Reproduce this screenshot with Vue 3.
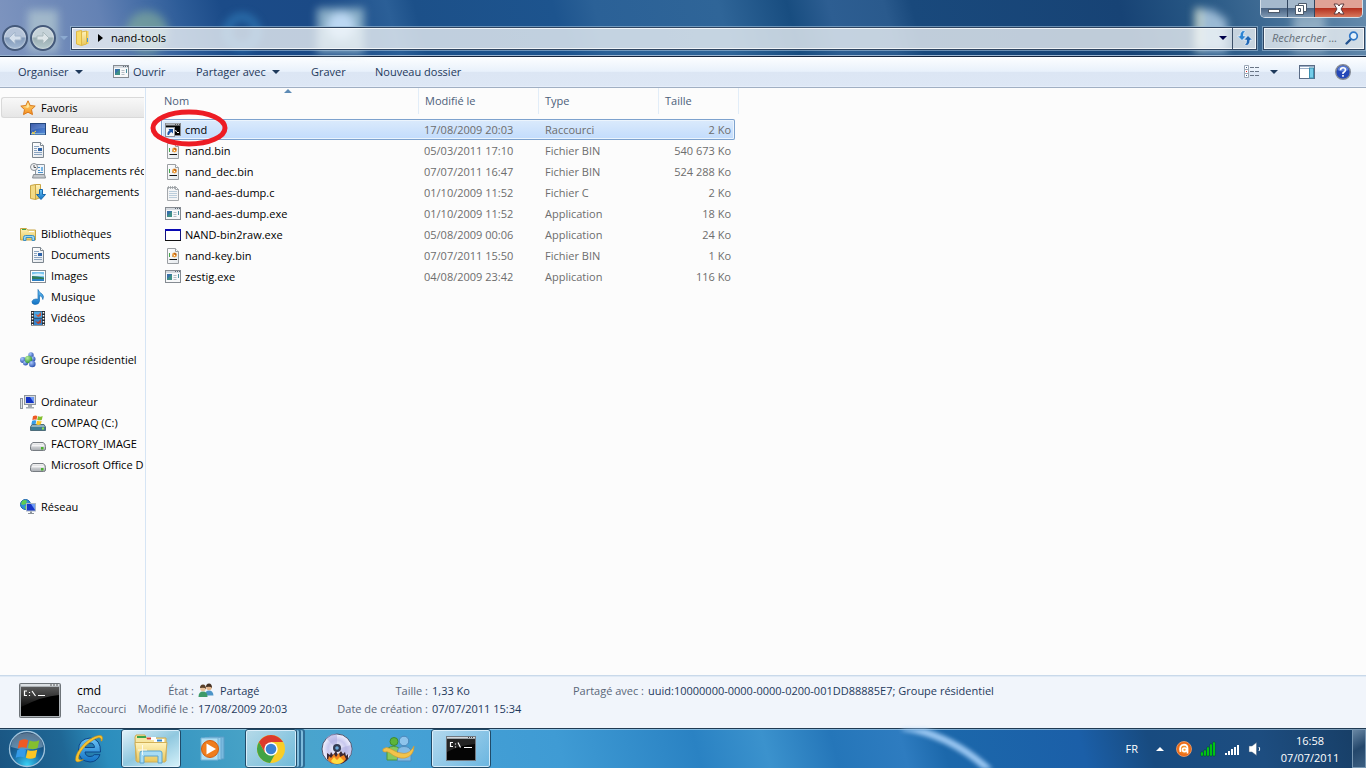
<template>
  <div class="explorer">
    <svg class="sprite" width="0" height="0" aria-hidden="true">
      <defs>
        <linearGradient id="g-doc" x1="0" y1="0" x2="1" y2="1"><stop offset="0" stop-color="#fff" /><stop offset="1" stop-color="#e4e8ec" /></linearGradient>
        <linearGradient id="g-gold" x1="0" y1="0" x2="0" y2="1"><stop offset="0" stop-color="#fff3bd" /><stop offset="1" stop-color="#e9c75a" /></linearGradient>
        <linearGradient id="g-star" x1="0" y1="0" x2="0" y2="1"><stop offset="0" stop-color="#ffe680" /><stop offset="1" stop-color="#f58a1c" /></linearGradient>
        <linearGradient id="g-screen" x1="0" y1="0" x2="1" y2="1"><stop offset="0" stop-color="#1c3f9c" /><stop offset="1" stop-color="#5a92dc" /></linearGradient>
        <linearGradient id="g-blue" x1="0" y1="0" x2="0" y2="1"><stop offset="0" stop-color="#6cc4f5" /><stop offset="1" stop-color="#1272c4" /></linearGradient>
        <linearGradient id="g-drive" x1="0" y1="0" x2="0" y2="1"><stop offset="0" stop-color="#f6f6f6" /><stop offset="1" stop-color="#a9adb2" /></linearGradient>
        <linearGradient id="g-glare" x1="0" y1="0" x2="0" y2="1"><stop offset="0" stop-color="#777" /><stop offset="1" stop-color="#111" /></linearGradient>
        <radialGradient id="g-orb" cx=".5" cy=".95" r=".9"><stop offset="0" stop-color="#39d0f4" /><stop offset=".45" stop-color="#1b6fa8" /><stop offset="1" stop-color="#12395f" /></radialGradient>
        <radialGradient id="g-people" cx=".35" cy=".3" r=".8"><stop offset="0" stop-color="#a8c8ff" /><stop offset="1" stop-color="#1d43a4" /></radialGradient>
        <radialGradient id="g-green" cx=".35" cy=".3" r=".8"><stop offset="0" stop-color="#baf0a0" /><stop offset="1" stop-color="#1f8a28" /></radialGradient>
        <radialGradient id="g-orange" cx=".5" cy=".5" r=".6"><stop offset="0" stop-color="#ffb03a" /><stop offset="1" stop-color="#e24b08" /></radialGradient>
        <radialGradient id="g-disc" cx=".5" cy=".5" r=".5"><stop offset="0" stop-color="#fff" /><stop offset=".6" stop-color="#c8c8ee" /><stop offset="1" stop-color="#f4f4ff" /></radialGradient>
      </defs>
      <symbol id="i-star" viewBox="0 0 16 16">
        <path d="M8 .8l2.200 4.700 5 .6-3.700 3.500 1 5L8 12.200l-4.500 2.400 1-5L.8 6.100l5-.6z" fill="url(#g-star)" stroke="#d9791c" />
        <path d="M8 3l1.300 3.500L8 8 3.500 6.700l3-.3z" fill="#fff6c0" opacity=".7" />
      </symbol>
      <symbol id="i-desktop" viewBox="0 0 16 16">
        <rect x=".5" y="2.500" width="15" height="11" fill="url(#g-screen)" stroke="#24477e" />
        <path d="M1 12h14v1.500H1z" fill="#7fb0dd" />
        <path d="M2 11l3 2M2 13l4-3" stroke="#f7d54a" />
        <path d="M1 3h14v4Q7 7 1 10z" fill="#fff" opacity=".15" />
      </symbol>
      <symbol id="i-doc" viewBox="0 0 16 16">
        <path d="M2.500.5h8l3 3v12h-11z" fill="url(#g-doc)" stroke="#7c868f" />
        <path d="M10.500.5v3h3" fill="#fff" stroke="#7c868f" />
        <path d="M4 4.500h5M4 6.500h3M4 8.500h3M4 10.500h8M4 12.500h8" stroke="#8ba4c0" />
        <rect x="8" y="6" width="4" height="3" fill="#2d62a8" />
      </symbol>
      <symbol id="i-recent" viewBox="0 0 16 16">
        <path d="M5.500 1.500h9v10h-9z" fill="#eef4fa" stroke="#8a949e" />
        <path d="M8 4.500h2M8 7.500h2M8 9.500h5" stroke="#4a8fc8" /><rect x="11" y="4" width="2" height="4" fill="#77b5e4" />
        <path d="M3.500 11.500h11l1 3.500h-13z" fill="#c5c9cd" stroke="#888e94" />
        <circle cx="4" cy="4" r="3.500" fill="#f2f3f5" stroke="#8a9096" />
        <path d="M4 2v2.500h2" fill="none" stroke="#555" />
      </symbol>
      <symbol id="i-download" viewBox="0 0 16 16">
        <path d="M.5 1.500l5-1v15l-5-1z" fill="#f2da85" stroke="#c9a545" />
        <path d="M5.500.5h5v13l-5 2z" fill="url(#g-gold)" stroke="#c9a545" />
        <path d="M9.500 5.500h3v5h3l-4.500 5-4.500-5h3z" fill="url(#g-blue)" stroke="#1667ac" />
      </symbol>
      <symbol id="i-library" viewBox="0 0 16 16">
        <path d="M.5 2.500h6l1 1.500h8v10H.5z" fill="url(#g-gold)" stroke="#c9a545" />
        <path d="M2 3.500h4" stroke="#39a34c" /><path d="M9 5.500h5" stroke="#fff" />
        <path d="M3.500 14.500v-3q0-2 2-2h7q2 0 2 2v3h-2.500v-3h-6v3z" fill="#9bd8f4" stroke="#3d8fc1" />
      </symbol>
      <symbol id="i-image" viewBox="0 0 16 16">
        <rect x=".5" y="2.500" width="15" height="12" fill="#fff" stroke="#858d95" />
        <rect x="2" y="4" width="12" height="9" fill="#79c3ee" /><path d="M2 6.500q6-2 12 0V8H2z" fill="#d8f0fb" />
        <path d="M2 8q5 0 12 1.500V11H2z" fill="#2f7d5d" /><path d="M2 11h12v2H2z" fill="#2b7fc4" />
      </symbol>
      <symbol id="i-music" viewBox="0 0 16 16">
        <path d="M8 .5q1 3 4 4.500 2.500 2 .8 5.500Q13 7.500 9.500 6.500v5.500q-.3 3.500-4.500 3.500-3.500-.5-3-3 .8-2.500 4-2.500l2 .3z" fill="url(#g-blue)" stroke="#1a6fb5" stroke-width=".7" />
      </symbol>
      <symbol id="i-video" viewBox="0 0 16 16">
        <rect x="1" y="1" width="14" height="14.500" fill="#262c33" />
        <rect x="4" y="1.500" width="8" height="6.300" fill="#4aa6e6" /><rect x="4" y="8.500" width="8" height="6.500" fill="#3584cc" />
        <path d="M5 4l3 1 3-3v4l-3 1z" fill="#c8553c" /><path d="M5 11l3 1 3-3v4l-3 1z" fill="#b34430" />
        <path d="M2.500 2v13M13.500 2v13" stroke="#fff" stroke-width="1.500" stroke-dasharray="1.500 1.500" />
      </symbol>
      <symbol id="i-homegroup" viewBox="0 0 16 16">
        <circle cx="11" cy="3" r="2.700" fill="url(#g-people)" /><circle cx="3" cy="8" r="3" fill="url(#g-people)" />
        <circle cx="12.800" cy="7" r="2.700" fill="url(#g-people)" /><circle cx="5.500" cy="11" r="2.500" fill="url(#g-people)" />
        <circle cx="8.500" cy="7.500" r="3.700" fill="url(#g-green)" /><circle cx="12.300" cy="12" r="3.300" fill="url(#g-people)" />
      </symbol>
      <symbol id="i-computer" viewBox="0 0 16 16">
        <rect x=".5" y="4.500" width="2" height="10" fill="#dfe3e6" stroke="#8d959c" />
        <rect x="4.500" y="1.500" width="11" height="9" fill="#d5d9dd" stroke="#8d959c" />
        <rect x="6" y="3" width="8" height="6" fill="#1433c4" /><path d="M10 3h4v6z" fill="#6c97f2" />
        <path d="M8 11h4v2h2v1.500H6V13h2z" fill="#a4abb1" />
      </symbol>
      <symbol id="i-flag" viewBox="-2 0 18 16">
        <path d="M1 1.800Q4-.2 7.500 1.300L6.300 7Q3 5.600 0 7.300z" fill="#ee5a24" /><path d="M8.500 1.600Q12 3 15.500 1.400L14.300 7Q11 8.500 7.300 7z" fill="#84bf2e" />
        <path d="M-.3 8.300Q3 6.800 6 8.100L4.800 13.700Q1.500 12.500-1.500 14z" fill="#359be8" /><path d="M7 8.300Q10.500 9.700 14 8.200L12.800 13.800Q9 15.500 5.800 14z" fill="#fcc624" />
      </symbol>
      <symbol id="i-sysdrive" viewBox="0 0 16 16">
        <path d="M2 9.500h12l1.500 2.500v3.500H.5V12z" fill="#8fb0bd" stroke="#4d6d7b" /><path d="M1 12h14v3H1z" fill="#3f7c94" />
        <rect x="12" y="12.500" width="2" height="2" fill="#8de24c" />
        <use href="#i-flag" x="1" y="0" width="12" height="11" />
      </symbol>
      <symbol id="i-drive" viewBox="0 0 16 16">
        <path d="M3 6.500h10q2.500 1 2.500 4V13q0 1.500-2 1.500h-11q-2 0-2-1.500v-2.500q0-3 2.500-4z" fill="url(#g-drive)" stroke="#777c82" />
        <path d="M2 9.800h12" stroke="#fff" /><rect x="11" y="11" width="2.500" height="2.500" fill="#49b32c" />
      </symbol>
      <symbol id="i-network" viewBox="0 0 16 16">
        <circle cx="5.500" cy="5.500" r="5" fill="#2f8fdc" stroke="#1c64a8" />
        <path d="M2 2q3-2 5 0l-1 3-3 1-2-1zM5 7l3 0-1 3-2 0z" fill="#5ecb52" />
        <rect x="6.500" y="4.500" width="9" height="7.500" fill="#1736c8" stroke="#aab6c4" /><path d="M11 5h4v6z" fill="#6f9cf5" />
        <path d="M10 12.500h2v1.500h2v1H8v-1h2z" fill="#8b939b" />
      </symbol>
      <symbol id="i-app" viewBox="0 0 16 16">
        <rect x=".5" y="1.500" width="15" height="12" fill="#f7f8f9" stroke="#858b92" />
        <path d="M1 3h14" stroke="#d5dae0" stroke-width="2" /><path d="M10 2.500h1m1 0h1m1 0h1" stroke="#5b6874" />
        <path d="M2 5h5v6H2z" fill="#3f8f86" /><path d="M2 5h5l-5 5z" fill="#3771a8" />
        <path d="M8.500 6.500h3M8.500 8.500h3M8.500 10.500h3" stroke="#b5bdc5" /><path d="M13.500 5v4" stroke="#4a90a0" />
      </symbol>
      <symbol id="i-shortcut" viewBox="0 0 16 16">
        <rect x=".5" y="1.500" width="15" height="12" fill="#050505" stroke="#85898e" />
        <path d="M1 2.500h14" stroke="#b4b9be" stroke-width="2" /><path d="M10 2.500h1m1 0h1m1 0h1" stroke="#555" />
        <path d="M10.500 8l1 2M12 10.500h2" stroke="#fff" />
        <rect x=".5" y="5.500" width="9" height="9" fill="#f4f6f9" stroke="#8d949c" />
        <path d="M2.500 13q-.5-3.500 2-4.500L3.500 7H8v4.500L6.500 10Q4.500 10.500 4 13z" fill="#1e56a8" />
      </symbol>
      <symbol id="i-bin" viewBox="0 0 16 16">
        <path d="M2.500.5h8l3 3v12h-11z" fill="url(#g-doc)" stroke="#9a9ea2" /><path d="M10.500.5v3h3" fill="#fff" stroke="#9a9ea2" />
        <path d="M4.500 5v4" stroke="#45a84c" /><path d="M7 8h1" stroke="#555" />
        <circle cx="9.500" cy="7" r="2.400" fill="#f0a040" /><path d="M8.500 5h2l1 2-1 .5z" fill="#b8621c" /><path d="M9 7.500h1" stroke="#fff" />
        <path d="M4.500 11.500h7.500" stroke="#151515" />
      </symbol>
      <symbol id="i-text" viewBox="0 0 16 16">
        <path d="M2.500 2.500h9l2 2v11h-11z" fill="#f4f5f6" stroke="#a4a8ac" />
        <path d="M3.500 1v3M5.500 1v3M7.500 1v3M9.500 1v3" stroke="#9b9fa3" stroke-width=".8" />
        <path d="M4 6.500h8M4 8.500h8M4 10.500h8M4 12.500h8" stroke="#bacddb" /><path d="M10.500 1.500v3h3z" fill="#fff" stroke="#a4a8ac" />
      </symbol>
      <symbol id="i-window" viewBox="0 0 16 16">
        <rect x=".5" y="2.500" width="15" height="11" fill="#fff" stroke="#11127c" /><path d="M0 3h16" stroke="#0a0ab4" stroke-width="2" /><path d="M0 13.500h16" stroke="#111" />
      </symbol>
      <symbol id="i-folder" viewBox="0 0 16 16">
        <path d="M1.500 1.500l5-1v15l-5-1.500z" fill="#f8dc6a" stroke="#dfb845" /><path d="M6.500 2l5-1v13l-5 1.500z" fill="url(#g-gold)" stroke="#dfb845" />
        <path d="M12 1h1.500v13H12z" fill="#f5d25e" /><path d="M12.500 8v4" stroke="#4b9bd8" />
      </symbol>
      <symbol id="i-views" viewBox="0 0 16 16">
        <path d="M.5 1.500h4v4h-4zM.5 5.500h4v4h-4zM.5 9.500h4v4h-4z" fill="#fff" stroke="#9aa6b5" />
        <path d="M2 3.500h1M2 11.500h1" stroke="#335a8a" /><path d="M2 7.500h1" stroke="#d22" />
        <path d="M6 3.500h4m1 0h4M6 7.500h4m1 0h4M6 11.500h4m1 0h4" stroke="#6a7686" />
      </symbol>
      <symbol id="i-pane" viewBox="0 0 16 16">
        <rect x=".5" y="1.500" width="15" height="13" fill="#fff" stroke="#5a6c86" /><path d="M1 2.500h14M1 4.500h9" stroke="#9db0c8" />
        <rect x="10.500" y="4" width="4" height="10" fill="#74cdea" stroke="#3b8eae" />
      </symbol>
      <symbol id="i-help" viewBox="0 0 16 16">
        <circle cx="8" cy="8" r="7.300" fill="#2447b8" stroke="#858b95" stroke-width="1.400" /><path d="M2.500 6Q3 2 8 2t5.500 4Q8 9 2.500 6z" fill="#86a6ee" opacity=".6" />
        <path d="M5.500 6.200q0-2.400 2.500-2.400t2.500 2.100Q10.500 7.300 8 9v1M8 11v1.800" fill="none" stroke="#fff" stroke-width="1.600" />
      </symbol>
      <symbol id="i-refresh" viewBox="0 0 16 16">
        <path d="M7.500.5Q3 .5 3 6H.5L5 10.500 9.300 6H6.500Q6.300 2.500 8 1.500z" fill="#2d84d2" stroke="#eef6ff" stroke-width=".7" />
        <path d="M8.500 15.500Q13 15.500 13 10h2.500L11 5.500 6.700 10h2.800q.2 3.500-1.500 4.500z" fill="#1f66b4" stroke="#eef6ff" stroke-width=".7" />
      </symbol>
      <symbol id="i-search" viewBox="0 0 16 16">
        <path d="M7.500 8.500L2.500 13.500" stroke="#23538f" stroke-width="2.400" stroke-linecap="round" /><circle cx="9.500" cy="6" r="3.800" fill="#e4f1fb" stroke="#2f77c6" stroke-width="1.700" />
      </symbol>
      <symbol id="i-users" viewBox="0 0 16 16">
        <path d="M7 12.500q0-5 4-5t4.500 5z" fill="#4d95c8" /><circle cx="11" cy="4.500" r="2.800" fill="#e2b58c" /><path d="M8 4q0-3.500 3-3.500T14 5Q13 3 8 4z" fill="#453224" />
        <path d="M.5 14q0-5.500 4.500-5.500T9.500 14z" fill="#3e9a68" /><circle cx="5" cy="5.500" r="2.800" fill="#e9c29b" /><path d="M2 5q0-3.500 3-3.500T8 6Q7 4 2 5z" fill="#59402a" />
      </symbol>
      <symbol id="i-console" viewBox="0 0 42 36">
        <rect x=".5" y=".5" width="41" height="34" rx="1" fill="#aeb3b7" stroke="#6e7479" /><path d="M2 2h38" stroke="#dce0e3" stroke-width="2" />
        <path d="M31 2h2m1 0h2m1 0h2" stroke="#555" /><rect x="2" y="4" width="38" height="29" fill="#000" />
        <path d="M2 4h38v8Q24 13 2 24z" fill="url(#g-glare)" opacity=".75" />
        <path d="M8 8H5.500v4.500H8M10.500 9v1m0 2v1M13 8l3.500 5M19 12.500h7" fill="none" stroke="#fff" stroke-width="1.200" />
      </symbol>
      <symbol id="i-console-small" viewBox="0 0 30 26">
        <rect x=".5" y=".5" width="29" height="24" fill="#9da3a8" stroke="#717880" /><path d="M1 1.500h28" stroke="#d4d9dd" /><path d="M22 1.500h1m1 0h1m1 0h1" stroke="#444" />
        <rect x="1" y="3" width="28" height="21" fill="#050505" /><path d="M1 3h28v5Q14 9 1 16z" fill="#444" opacity=".5" />
        <path d="M7 6.500H4.500v4H7M9.500 7.500v1m0 2v1M12 6.500l2.500 5M18 11.500h8" fill="none" stroke="#fff" stroke-width="1.200" />
      </symbol>
      <symbol id="i-orb" viewBox="0 0 38 38">
        <circle cx="19" cy="19" r="17.500" fill="url(#g-orb)" stroke="#9fc3dc" stroke-width="1.300" />
        <path d="M3 17Q4 3 19 3t16 14Q19 22 3 17z" fill="#fff" opacity=".3" />
        <use href="#i-flag" x="7" y="8" width="25" height="23" />
      </symbol>
      <symbol id="i-ie" viewBox="0 0 32 32">
        <path d="M27.500 19H12q.5 4.500 5 4.500 3 0 4.200-1.800h5.800Q24 29 17 29 5.500 28 5.500 17T17 5q11 1 10.500 14zM12 14.500h9.500Q21 10 17 10t-5 4.500z" fill="url(#g-blue)" stroke="#0b4688" />
        <path d="M29 8q2-6-3-5.500Q20 3 12 10 2 20 2.500 27q1 4 8-.5-5 1.500-5-1.500Q6 19 14 11.500 22 5 26 4.500q3 .5 2 3.500z" fill="#f7c531" stroke="#c88d12" stroke-width=".6" />
      </symbol>
      <symbol id="i-explorer" viewBox="0 0 34 32">
        <path d="M1 4l1-2h9l1 3h20v23H2z" fill="#f7e6a2" stroke="#cfa951" />
        <path d="M3 4h9" stroke="#3aa34b" stroke-width="2" /><path d="M13 5.500h9" stroke="#fff" stroke-width="3" /><path d="M13 5.500h4" stroke="#d2402c" stroke-width="2" />
        <path d="M20 7.500h10" stroke="#fff" stroke-width="3" /><path d="M23 7.500h5" stroke="#3284cc" stroke-width="2" />
        <path d="M1 9.500h32L31 29H3z" fill="url(#g-gold)" stroke="#d2b057" />
        <path d="M6 30V20q0-2 2-2h18q2 0 2 2v10h-4v-7H10v7z" fill="#a8dcf4" stroke="#5aa4cf" /><path d="M8.500 12v10M4 17h9" stroke="#fff" opacity=".8" />
      </symbol>
      <symbol id="i-wmp" viewBox="0 0 28 28">
        <path d="M10 2h15v22H10z" fill="#78b9de" stroke="#5b9cc6" /><path d="M6 2.500h16v22H6z" fill="#94cce9" stroke="#68a8d0" /><path d="M2 3h17v22H2z" fill="#b1dff3" stroke="#77b4d8" />
        <circle cx="11" cy="14" r="8.500" fill="#ef7d1d" stroke="#d35e10" /><path d="M7.500 8.500L17 14l-9.500 5.500z" fill="#fff" />
      </symbol>
      <symbol id="i-chrome" viewBox="0 0 30 30">
        <circle cx="15" cy="15" r="14" fill="#f8cd28" /><path d="M15 15L2.900 8A14 14 0 0 1 27.100 8H15z" fill="#dc3b2c" />
        <path d="M2.900 8A14 14 0 0 0 14 29l6.500-11.500L9 18.500z" fill="#42a346" /><path d="M3 8L9 18.500 15 8z" fill="#dc3b2c" />
        <circle cx="15" cy="15" r="6.700" fill="#fff" /><circle cx="15" cy="15" r="5.300" fill="#3b82d4" />
      </symbol>
      <symbol id="i-burn" viewBox="0 0 32 32">
        <circle cx="16" cy="16" r="15" fill="url(#g-disc)" stroke="#50546c" /><path d="M16 16L5 5Q11 0 16 1zM16 16l14-4q2 6-1 11z" fill="#a9a8dd" opacity=".5" />
        <circle cx="16" cy="15" r="4" fill="#333a50" /><circle cx="16" cy="15" r="1.800" fill="#6aa6d6" />
        <path d="M6 26v-6l3 2 1-3 2 3 3-4 2 4 3-4 2 3 2-2 1 4 2-2v5q-4 5-10 5T6 26z" fill="#3c2732" />
        <path d="M7 27l1-4 2 2 3-4 2 3 3-4 1 4 4-2 2 4q-3 5-9 5T7 27z" fill="#f48420" /><path d="M10 28l3-4 3 3 3-3 4 4q-3 3-7 3t-6-3z" fill="#ffdc43" />
      </symbol>
      <symbol id="i-messenger" viewBox="0 0 34 28">
        <circle cx="12" cy="6.500" r="4" fill="#5cb53a" stroke="#3f8a2e" /><path d="M5 25V16q0-4.500 6.500-4.500T18 16v9z" fill="#86c960" stroke="#4d963a" />
        <circle cx="22" cy="6" r="4.800" fill="#8ec4ec" stroke="#4a86ba" /><path d="M15.500 26V17q0-5.500 6.500-5.500t7 5.500v9z" fill="#83bbe4" stroke="#518dbd" />
        <path d="M1 14q3-3 8 0 7 4.500 13 4.500T32 11q0 10-9 12-8 1-15-5-3-2-5-1-3 0-2-3z" fill="#f2c34b" stroke="#cf9a33" stroke-width=".7" />
      </symbol>
      <symbol id="i-avast" viewBox="0 0 16 16">
        <circle cx="8" cy="8" r="7.500" fill="url(#g-orange)" stroke="#ffb277" stroke-width=".7" />
        <path d="M4.500 11Q2.800 4 8 3.700q3.500 0 3.500 3.800v5M8.500 7q-2 0-2 1.800t2 1.800 2-1.800T8.500 7z" fill="none" stroke="#fff" stroke-width="1.700" />
      </symbol>
      <symbol id="i-bars" viewBox="0 0 16 16">
        <path d="M1 11h2v4H1zM4 9h2v6H4zM7 6h2v9H7zM10 3h2v12h-2zM13 1h2v14h-2z" fill="#0f0" stroke="#053" stroke-width=".7" />
      </symbol>
      <symbol id="i-signal" viewBox="0 0 16 16">
        <path d="M1 12h2v2H1zM4 10h2v4H4zM7 8h2v6H7zM10 6h2v8h-2zM13 4h2v10h-2z" fill="#fff" />
      </symbol>
      <symbol id="i-speaker" viewBox="0 0 16 16">
        <path d="M1 5h3l4.500-3.500v13L4 11H1z" fill="#fff" stroke="#48617c" stroke-width=".5" /><path d="M11 6q1.500 2 0 4" fill="none" stroke="#fff" />
      </symbol>
    </svg>

    <header class="titlebar">
      <svg class="desktop-left" width="400" height="56" aria-hidden="true">
        <rect x="28" y="10" width="30" height="42" fill="#c8dcd8" opacity=".55" />
        <circle cx="147" cy="32" r="21" fill="#7fa99b" opacity=".7" />
        <circle cx="242" cy="32" r="15" fill="none" stroke="#3f9edb" stroke-width="7" opacity=".5" />
        <rect x="317" y="8" width="47" height="45" fill="#a9cbd8" opacity=".75" />
        <circle cx="341" cy="26" r="14" fill="#cbe4ff" opacity=".8" />
      </svg>
      <svg class="desktop-right" width="200" height="56" aria-hidden="true">
        <path d="M29 8l18 2 14 10v32H29z" fill="#b6d2e8" opacity=".8" /><path d="M29 8h7v42h-7z" fill="#f1f0bd" opacity=".5" />
        <path d="M127 14h32v38h-32z" fill="#cfdfe8" opacity=".5" />
      </svg>
      <div class="window-buttons">
        <button type="button" aria-label="Réduire"><svg width="14" height="12" viewBox="0 0 14 12"><rect x="1.500" y="6.500" width="11" height="3" fill="#fff" stroke="#4c5a6b" /></svg></button>
        <button type="button" aria-label="Restaurer"><svg width="14" height="12" viewBox="0 0 14 12"><path d="M4.500.5h8v8h-8z" fill="#fff" stroke="#4c5a6b" /><path d="M1.500 2.500h8v9h-8zM4.500 5.500h2v3h-2z" fill="#fff" fill-rule="evenodd" stroke="#4c5a6b" /></svg></button>
        <button type="button" class="close" aria-label="Fermer"><svg width="14" height="12" viewBox="0 0 14 12"><path d="M2 1h3.500L7 3l1.500-2H12L9 6l3 5H8.500L7 9l-1.500 2H2l3-5z" fill="#fff" stroke="#5c3a3c" /></svg></button>
      </div>
      <div class="navigation">
        <button type="button" class="round" aria-label="Précédent"><svg width="16" height="16" viewBox="0 0 16 16"><path d="M8 2L2 8l6 6v-4h6V6H8z" fill="#d5e0ec" stroke="#a3b6cc" /></svg></button>
        <button type="button" class="round forward" aria-label="Suivant"><svg width="16" height="16" viewBox="0 0 16 16"><path d="M8 2l6 6-6 6v-4H2V6h6z" fill="#dde5e8" stroke="#a9b9bd" /></svg></button>
        <button type="button" class="history" aria-label="Pages récentes"><span class="caret"></span></button>
        <div class="address">
          <svg class="icon"><use href="#i-folder" /></svg>
          <span class="crumb-arrow"></span>
          <span class="crumb">nand-tools</span>
          <button type="button" class="address-drop" aria-label="Emplacements précédents"><span class="caret"></span></button>
          <button type="button" class="refresh" aria-label="Actualiser"><svg class="icon"><use href="#i-refresh" /></svg></button>
        </div>
        <label class="search">
          <input type="text" placeholder="Rechercher ..." aria-label="Rechercher" />
          <svg class="icon"><use href="#i-search" /></svg>
        </label>
      </div>
    </header>

    <div class="toolbar">
      <button type="button" class="organise">Organiser <span class="caret"></span></button>
      <button type="button" class="open"><svg class="icon"><use href="#i-app" /></svg>Ouvrir</button>
      <button type="button" class="share">Partager avec <span class="caret"></span></button>
      <button type="button" class="burn">Graver</button>
      <button type="button">Nouveau dossier</button>
      <div class="toolbar-right">
        <button type="button" aria-label="Affichage"><svg class="icon"><use href="#i-views" /></svg></button>
        <button type="button" aria-label="Autres options"><span class="caret"></span></button>
        <button type="button" class="preview" aria-label="Volet de visualisation"><svg class="icon"><use href="#i-pane" /></svg></button>
        <button type="button" class="help" aria-label="Aide"><svg class="icon"><use href="#i-help" /></svg></button>
      </div>
    </div>

    <main class="content">
      <nav class="sidebar">
        <ul v-for="group in groups" :key="group.label">
          <li>
            <a href="#" class="root" :class="{ active: group.active }"><svg class="icon"><use :href="'#i-' + group.icon" /></svg>{{ group.label }}</a>
          </li>
          <li v-for="item in group.items" :key="item.label">
            <a href="#"><svg class="icon"><use :href="'#i-' + item.icon" /></svg>{{ item.label }}</a>
          </li>
        </ul>
      </nav>

      <section class="files">
        <table>
          <thead>
            <tr>
              <th>Nom<span class="sort"></span></th>
              <th>Modifié le</th>
              <th>Type</th>
              <th>Taille</th>
            </tr>
          </thead>
          <tbody>
            <tr v-for="file in files" :key="file.name" :class="{ selected: file.name === selected }" @click="selected = file.name">
              <td class="name"><svg class="icon"><use :href="'#i-' + file.icon" /></svg>{{ file.name }}</td>
              <td class="date">{{ file.date }}</td>
              <td>{{ file.type }}</td>
              <td class="size">{{ file.size }}</td>
            </tr>
          </tbody>
        </table>
        <svg class="marker" width="78" height="38" aria-hidden="true"><ellipse cx="39" cy="19" rx="36" ry="16" fill="none" stroke="#ed1c24" stroke-width="5" /></svg>
      </section>
    </main>

    <section class="details">
      <svg class="preview-icon" width="42" height="36"><use href="#i-console" /></svg>
      <div class="facts">
        <span class="title">cmd</span>
        <span class="label">État :</span>
        <span class="value shared"><svg class="icon"><use href="#i-users" /></svg>Partagé</span>
        <span class="label">Taille :</span>
        <span class="value">1,33 Ko</span>
        <span class="label">Partagé avec :</span>
        <span class="value">uuid:10000000-0000-0000-0200-001DD88885E7; Groupe résidentiel</span>
        <span class="kind">Raccourci</span>
        <span class="label">Modifié le :</span>
        <span class="value">17/08/2009 20:03</span>
        <span class="label">Date de création :</span>
        <span class="value">07/07/2011 15:34</span>
      </div>
    </section>

    <footer class="taskbar">
      <svg class="streak" width="300" height="40" aria-hidden="true">
        <path d="M82-2q50 8 88 44" fill="none" stroke="#a9d2fa" stroke-width="7" opacity=".9" />
      </svg>
      <button v-for="task in tasks" :key="task.icon" type="button" class="task" :class="task.state" :aria-label="task.label">
        <svg :width="task.width" :height="task.height"><use :href="'#i-' + task.icon" /></svg>
      </button>
      <div class="tray">
        <span class="lang">FR</span>
        <button type="button" aria-label="Afficher les icônes cachées"><span class="caret up"></span></button>
        <svg class="icon"><use href="#i-avast" /></svg>
        <svg class="icon"><use href="#i-bars" /></svg>
        <svg class="icon"><use href="#i-signal" /></svg>
        <svg class="icon"><use href="#i-speaker" /></svg>
        <div class="clock"><span>16:58</span><span>07/07/2011</span></div>
      </div>
      <button type="button" class="show-desktop" aria-label="Afficher le Bureau"></button>
    </footer>
  </div>
</template>

<script setup>
import { ref } from "vue";

const selected = ref("cmd");

const groups = [
  {
    label: "Favoris",
    icon: "star",
    active: true,
    items: [
      { label: "Bureau", icon: "desktop" },
      { label: "Documents", icon: "doc" },
      { label: "Emplacements récents", icon: "recent" },
      { label: "Téléchargements", icon: "download" },
    ],
  },
  {
    label: "Bibliothèques",
    icon: "library",
    items: [
      { label: "Documents", icon: "doc" },
      { label: "Images", icon: "image" },
      { label: "Musique", icon: "music" },
      { label: "Vidéos", icon: "video" },
    ],
  },
  { label: "Groupe résidentiel", icon: "homegroup", items: [] },
  {
    label: "Ordinateur",
    icon: "computer",
    items: [
      { label: "COMPAQ (C:)", icon: "sysdrive" },
      { label: "FACTORY_IMAGE", icon: "drive" },
      { label: "Microsoft Office D", icon: "drive" },
    ],
  },
  { label: "Réseau", icon: "network", items: [] },
];

const files = [
  { name: "cmd", date: "17/08/2009 20:03", type: "Raccourci", size: "2 Ko", icon: "shortcut" },
  { name: "nand.bin", date: "05/03/2011 17:10", type: "Fichier BIN", size: "540 673 Ko", icon: "bin" },
  { name: "nand_dec.bin", date: "07/07/2011 16:47", type: "Fichier BIN", size: "524 288 Ko", icon: "bin" },
  { name: "nand-aes-dump.c", date: "01/10/2009 11:52", type: "Fichier C", size: "2 Ko", icon: "text" },
  { name: "nand-aes-dump.exe", date: "01/10/2009 11:52", type: "Application", size: "18 Ko", icon: "app" },
  { name: "NAND-bin2raw.exe", date: "05/08/2009 00:06", type: "Application", size: "24 Ko", icon: "window" },
  { name: "nand-key.bin", date: "07/07/2011 15:50", type: "Fichier BIN", size: "1 Ko", icon: "bin" },
  { name: "zestig.exe", date: "04/08/2009 23:42", type: "Application", size: "116 Ko", icon: "app" },
];

const tasks = [
  { label: "Démarrer", icon: "orb", width: 38, height: 38, state: "start" },
  { label: "Internet Explorer", icon: "ie", width: 32, height: 32 },
  { label: "Explorateur Windows", icon: "explorer", width: 34, height: 32, state: "current" },
  { label: "Lecteur Windows Media", icon: "wmp", width: 28, height: 28 },
  { label: "Google Chrome", icon: "chrome", width: 30, height: 30, state: "stacked" },
  { label: "Gravure", icon: "burn", width: 32, height: 32 },
  { label: "Windows Live Messenger", icon: "messenger", width: 34, height: 28 },
  { label: "Invite de commandes", icon: "console-small", width: 30, height: 26, state: "running" },
];
</script>

<style>
body {
  margin: 0;
  overflow: hidden;
}
</style>

<style scoped>
.explorer {
  display: flex;
  flex-direction: column;
  min-height: 100vh;
  background: #fcfcfc;
  color: #000;
  font: 11px/18px "Open Sans", "Noto Sans", sans-serif;
}

.sprite {
  position: absolute;
}

.icon {
  width: 16px;
  height: 16px;
  flex: none;
}

button {
  display: flex;
  align-items: center;
  padding: 0;
  border: 0;
  background: none;
  color: inherit;
  font: inherit;
  white-space: nowrap;
}

.caret {
  border: 4px solid transparent;
  border-top-color: #1e395b;
  border-bottom: 0;
}

/* title bar */
.titlebar {
  position: relative;
  box-sizing: border-box;
  height: 57px;
  border-bottom: 1px solid #14243c;
  box-shadow: inset 0 -1px #9ab4d0;
  background: linear-gradient(75deg, #7f95bf 0%, #6482b4 8%, #3f69a3 12%, #2d5c98 14%, #1b4b88 17%, #1b4a86 24%, #2b5f97 29%, #1c5089 31%, #1d548e 41%, #2b6197 44%, #2f6598 53%, #184d80 58%, #2d5e92 61%, #2a5a8d 65%, #19497c 67%, #174375 82%, #285885 88%, #658bad 100%);
}

.desktop-left,
.desktop-right {
  position: absolute;
  top: 0;
  left: 0;
  filter: blur(4px);
}

.desktop-right {
  left: auto;
  right: 0;
}

.window-buttons {
  position: absolute;
  top: 0;
  right: 3px;
  display: flex;
  border: 1px solid #d4dfe9;
  border-top: 0;
  border-radius: 0 0 5px 5px;
  overflow: hidden;
}

.window-buttons button {
  width: 27px;
  height: 17px;
  justify-content: center;
  border-right: 1px solid #30455f;
  background: linear-gradient(#a5b9cd 0 45%, #4a6484 50%, #7e98b2);
}

.window-buttons .close {
  width: 47px;
  border-right: 0;
  background: linear-gradient(#e0a295 0 45%, #b53220 50%, #d8785c);
}

.navigation {
  position: relative;
  display: flex;
  align-items: center;
  padding: 25px 1px 0 2px;
}

.round {
  width: 26px;
  height: 26px;
  box-sizing: border-box;
  justify-content: center;
  border: 2px solid #44597a;
  border-radius: 50%;
  box-shadow: inset 0 0 2px #fff;
  background: linear-gradient(#b5c4d9 0 45%, #829aba 50%, #a3b9d3);
}

.forward {
  margin-left: 2px;
  background: linear-gradient(#c5d2d8 0 45%, #9aaeb3 50%, #b5c8cc);
}

.history {
  width: 15px;
  justify-content: center;
}

.history .caret {
  border-top-color: #8caad0;
}

.address,
.search {
  display: flex;
  align-items: center;
  box-sizing: border-box;
  height: 23px;
  border: 1px solid #2e4460;
  box-shadow: inset 0 0 0 1px rgba(255, 255, 255, 0.75), 0 0 0 1px rgba(160, 190, 215, 0.6);
  background: rgba(245, 247, 248, 0.76);
}

.address {
  flex: 1;
  padding-left: 3px;
}

.crumb-arrow {
  margin: 0 8px 0 7px;
  border: 4px solid transparent;
  border-left: 5px solid #000;
  border-right: 0;
}

.crumb {
  flex: 1;
}

.address-drop {
  width: 19px;
  height: 21px;
  justify-content: center;
}

.address-drop .caret {
  border-top-color: #00004a;
}

.refresh {
  width: 24px;
  height: 21px;
  justify-content: center;
  border-left: 1px solid #3c5068;
}

.search {
  width: 102px;
  margin-left: 6px;
  padding: 0 4px 0 8px;
}

.search input {
  width: 0;
  flex: 1;
  padding: 0;
  border: 0;
  outline: 0;
  background: none;
  font: italic 11px/18px "Open Sans", "Noto Sans", sans-serif;
}

.search input::placeholder {
  color: #656e78;
  opacity: 1;
}

/* toolbar */
.toolbar {
  display: flex;
  align-items: center;
  box-sizing: border-box;
  height: 31px;
  padding: 0 15px 0 18px;
  border-bottom: 1px solid #a0afc3;
  box-shadow: inset 0 -1px #e6eefa;
  background: linear-gradient(#fdfeff, #e8f1fb 48%, #dce6f4 50%, #dde7f5);
  color: #1e395b;
}

.toolbar .caret {
  margin-left: 6px;
}

.organise {
  width: 95px;
}

.open {
  width: 83px;
  gap: 4px;
}

.share {
  width: 115px;
}

.burn {
  width: 64px;
}

.toolbar-right {
  display: flex;
  align-items: center;
  margin-left: auto;
}

.toolbar-right .preview {
  margin-left: 21px;
}

.toolbar-right .help {
  margin-left: 20px;
}

.toolbar-right .caret {
  margin-left: 10px;
}

/* folder tree and file list */
.content {
  display: flex;
  flex: 1;
}

.sidebar {
  width: 144px;
  padding: 9px 0 0 1px;
  border-right: 1px solid #d6e5f5;
  overflow: hidden;
}

.sidebar ul {
  margin: 0 0 21px;
  padding: 0;
  list-style: none;
}

.sidebar a {
  display: flex;
  align-items: center;
  gap: 5px;
  box-sizing: border-box;
  height: 21px;
  width: 143px;
  padding-left: 29px;
  overflow: hidden;
  color: #000;
  text-decoration: none;
  white-space: nowrap;
}

.sidebar .root {
  padding-left: 19px;
}

.sidebar .active {
  padding-left: 18px;
  border: 1px solid #d9d9d9;
  border-right: 0;
  border-radius: 3px 0 0 3px;
  background: linear-gradient(#f8f8f8, #e6e6e6);
}

.files {
  position: relative;
  flex: 1;
}

table {
  display: block;
  margin-left: 15px;
}

thead,
tbody {
  display: block;
}

tr {
  display: grid;
  grid-template-columns: 258px 120px 120px 80px;
}

thead {
  height: 31px;
}

th {
  position: relative;
  padding-left: 6px;
  border-right: 1px solid #e2edf8;
  color: #4c607a;
  font-weight: 400;
  line-height: 24px;
  text-align: left;
}

th:first-child {
  padding-left: 3px;
}

.sort {
  position: absolute;
  top: 1px;
  right: 126px;
  border: 4px solid transparent;
  border-top: 0;
  border-bottom-color: #5e8bb5;
}

tbody tr {
  width: 574px;
  height: 21px;
  grid-template-columns: 258px 120px 120px 76px;
  align-items: center;
  box-sizing: border-box;
}

td {
  padding: 0 0 0 6px;
  color: #6d6d6d;
  white-space: nowrap;
}

.name {
  display: flex;
  align-items: center;
  gap: 4px;
  padding-left: 4px;
  color: #000;
}

.date {
  padding-left: 5px;
}

.size {
  padding-right: 4px;
  text-align: right;
}

.selected {
  border-radius: 2px;
  box-shadow: 0 0 0 1px #7da2ce inset, 0 0 0 2px #ebf4fd inset;
  background: linear-gradient(#dcebfc, #c1dbfc);
}

.marker {
  position: absolute;
  top: 21px;
  left: 4px;
}

/* details pane */
.details {
  display: flex;
  align-items: flex-start;
  gap: 16px;
  box-sizing: border-box;
  height: 53px;
  padding: 6px 19px 0;
  border-top: 1px solid #c9d9ea;
  box-shadow: inset 0 1px #e0eaf5;
  background: #f1f5fb;
  color: #1e395b;
}

.preview-icon {
  flex: none;
  margin-top: 1px;
}

.facts {
  display: grid;
  grid-template-columns: 54px 59px 134px 92px 134px 74px auto;
  gap: 0 4px;
  white-space: nowrap;
}

.title {
  color: #000;
  font-size: 12px;
}

.label {
  color: #5a6779;
  text-align: right;
}

.kind {
  color: #5a6779;
}

.shared {
  display: flex;
  align-items: center;
  gap: 6px;
}

/* taskbar */
.taskbar {
  position: relative;
  display: flex;
  align-items: stretch;
  box-sizing: border-box;
  height: 40px;
  border-top: 1px solid #203a52;
  box-shadow: inset 0 1px rgba(190, 220, 240, 0.6);
  background: linear-gradient(75deg, #1a5582, #1f6795 5%, #2b8dbd 8%, #4ba5c8 20%, #46a2d5 28%, #3f9bd4 41%, #2a82c3 51%, #3b92cd 56%, #2576b9 61%, #2e7cc0 66%, #1c68ab 69%, #1b5fa8 79%, #184b80 84%, #1d4d80 92%, #173d64);
}

.streak {
  position: absolute;
  top: 0;
  left: 60%;
  filter: blur(2px);
}

.task {
  position: relative;
  box-sizing: border-box;
  width: 60px;
  margin-right: 2px;
  justify-content: center;
}

.task.start {
  width: 54px;
  margin-right: 5px;
}

.task.current,
.task.running,
.task.stacked {
  border: 1px solid #204b69;
  border-radius: 3px;
  box-shadow: inset 0 0 0 1px rgba(230, 245, 255, 0.8);
  background: linear-gradient(135deg, rgba(255, 255, 255, 0.6), rgba(180, 225, 245, 0.35));
}

.task.current {
  background: linear-gradient(150deg, #e2f2f9, #90c8df 50%, #d6f2fa);
}

.task.stacked {
  width: 52px;
  margin-right: 10px;
  box-shadow: inset 0 0 0 1px rgba(230, 245, 255, 0.8), 3px 0 0 -1px #7fbcdc, 4px 0 #2f6d96, 7px 0 0 -1px #7fbcdc, 8px 0 #2f6d96;
}

.tray {
  display: flex;
  align-items: center;
  gap: 8px;
  margin-left: auto;
  color: #fff;
}

.lang {
  margin-right: 10px;
}

.tray .up {
  margin-right: 4px;
  border: 4px solid transparent;
  border-top: 0;
  border-bottom-color: #fff;
}

.clock {
  display: flex;
  flex-direction: column;
  width: 84px;
  margin-left: -4px;
  line-height: 17px;
  text-align: center;
}

.show-desktop {
  box-sizing: border-box;
  width: 14px;
  border: 1px solid #7897b3;
  background: linear-gradient(150deg, #6886a3, #24476b 50%, #3c5f82);
}
</style>
